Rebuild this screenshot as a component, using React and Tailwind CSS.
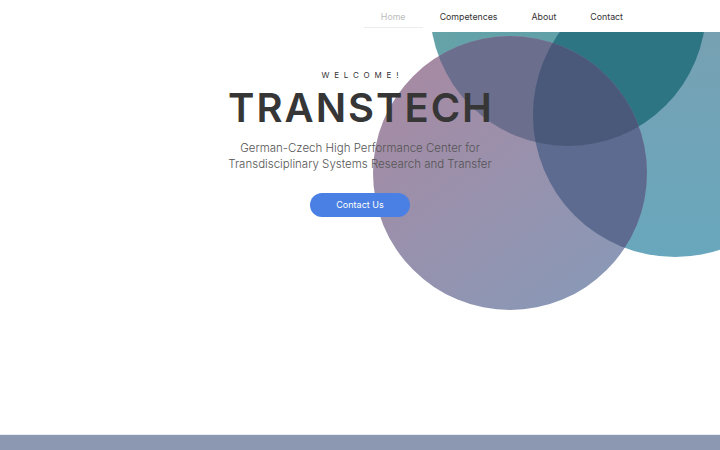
import React from "react";

function Circles() {
  return (
    <svg className="absolute left-0 top-0" width="720" height="402" viewBox="0 0 720 402">
      <defs>
        <clipPath id="cA"><circle cx="568" cy="-24" r="138" /></clipPath>
        <clipPath id="cB"><circle cx="675" cy="83" r="142" /></clipPath>
        <linearGradient id="gB" x1="0" y1="0" x2="0" y2="1">
          <stop offset="0" stopColor="#7b9fb0" />
          <stop offset="1" stopColor="#68a7bd" />
        </linearGradient>
        <linearGradient id="gC" x1="0.15" y1="0.1" x2="0.75" y2="0.95">
          <stop offset="0" stopColor="#a78aa3" />
          <stop offset="1" stopColor="#8a98b6" />
        </linearGradient>
        <linearGradient id="gA" x1="0" y1="0" x2="1" y2="0">
          <stop offset="0" stopColor="#65a3a9" />
          <stop offset="1" stopColor="#5b9ca4" />
        </linearGradient>
      </defs>
      <circle cx="568" cy="-24" r="138" fill="url(#gA)" />
      <circle cx="675" cy="83" r="142" fill="url(#gB)" />
      <g clipPath="url(#cA)">
        <circle cx="675" cy="83" r="142" fill="#2d7583" />
      </g>
      <circle cx="510" cy="141" r="137" fill="url(#gC)" />
      <g clipPath="url(#cA)">
        <circle cx="510" cy="141" r="137" fill="#6b6e8c" />
      </g>
      <g clipPath="url(#cB)">
        <circle cx="510" cy="141" r="137" fill="#5c6b8f" />
      </g>
      <g clipPath="url(#cA)">
        <g clipPath="url(#cB)">
          <circle cx="510" cy="141" r="137" fill="#4a5979" />
        </g>
      </g>
    </svg>
  );
}

export default function App() {
  const font = { fontFamily: "Inter, 'Open Sans', sans-serif" };
  return (
    <div className="w-[720px] h-[450px] overflow-hidden bg-white flex flex-col" style={font}>
      <nav className="h-[32px] flex justify-end pr-[80px] pt-[4px] bg-white text-[8.8px] text-[#333]">
        <div className="h-[24px] w-[59px] pt-[2px] flex items-center justify-center border-b border-[#ececec] text-[#bdbdbd]">Home</div>
        <div className="h-[24px] px-[17px] pt-[2px] flex items-center">Competences</div>
        <div className="h-[24px] px-[17px] pt-[2px] flex items-center">About</div>
        <div className="h-[24px] px-[17px] pt-[2px] flex items-center">Contact</div>
      </nav>
      <section className="relative h-[402px] shrink-0">
        <Circles />
        <div className="relative flex flex-col items-center pt-[37px]">
          <div className="h-[12px] leading-[12px] text-[8px] tracking-[0.6em] pl-[0.6em] text-[#333]">WELCOME!</div>
          <h1 className="mt-[5.5px] h-[41px] leading-[41px] text-[40px] font-semibold tracking-[0.05em] pl-[0.05em] text-[#363636]">TRANSTECH</h1>
          <p className="mt-[12px] text-[11.5px] leading-[16px] font-light text-[#555] text-center">
            German-Czech High Performance Center for
            <br />
            Transdisciplinary Systems Research and Transfer
          </p>
          <button className="mt-[21px] w-[100px] h-[24px] rounded-full bg-[#4a80e3] text-white text-[9px]">Contact Us</button>
        </div>
      </section>
      <div className="h-[16px] shrink-0 bg-[#8c98b2] border-t border-[#e9eef6]"></div>
    </div>
  );
}
